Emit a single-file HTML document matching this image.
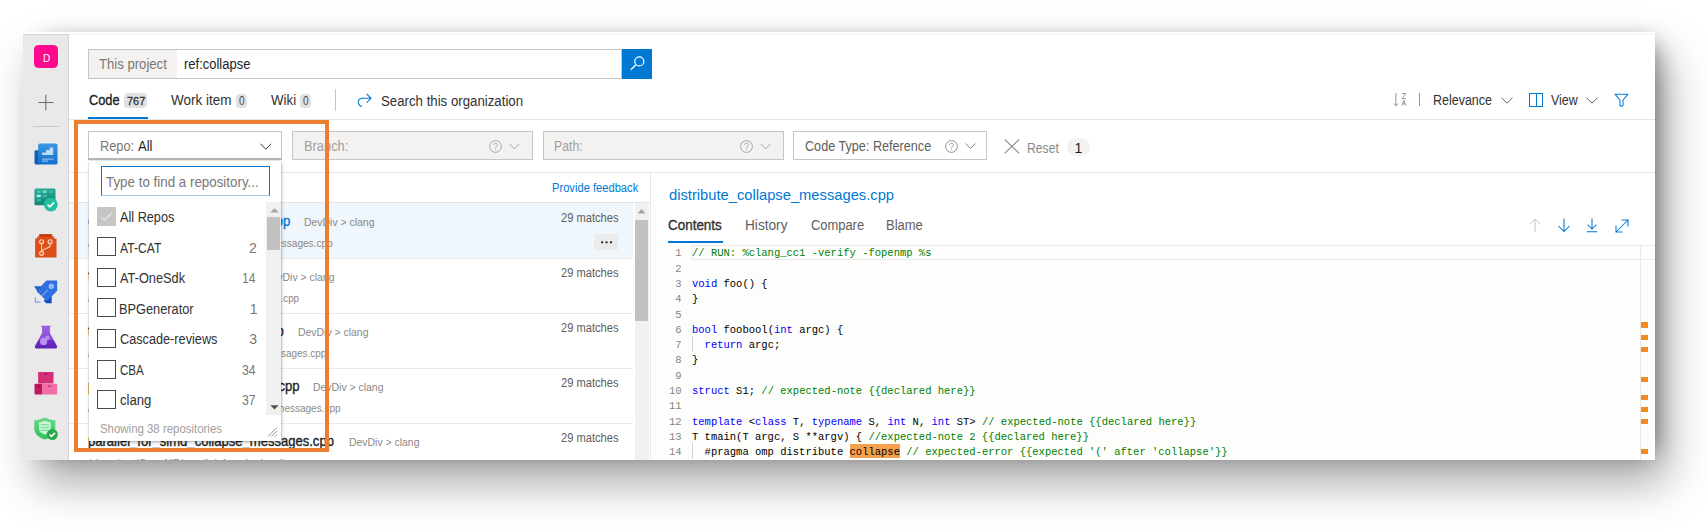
<!DOCTYPE html>
<html><head><meta charset="utf-8"><style>
*{margin:0;padding:0;box-sizing:border-box}
html,body{width:1707px;height:530px;background:#fff;overflow:hidden;font-family:"Liberation Sans",sans-serif;color:#323130}
#pg{position:absolute;left:23px;top:32px;width:1632px;height:428px;overflow:hidden;background:#fff;box-shadow:9.6px 1.3px 22.3px -10px rgba(0,0,0,0.488),12.6px 23.2px 41.3px -0.5px rgba(0,0,0,0.341)}
#c{position:absolute;left:-23px;top:-32px;width:1707px;height:530px}
.a{position:absolute}
.t{position:absolute;white-space:pre}
.mono{font-family:"Liberation Mono",monospace}
svg{position:absolute;overflow:visible}
</style></head><body>
<div id="pg"><div id="c">
<!-- sidebar -->
<div class="a" style="left:23px;top:34px;width:45px;height:430px;background:#e9e9e9;border-top:1px solid #d6d6d6"></div>
<div class="a" style="left:68px;top:34px;width:1px;height:430px;background:#d4d4d4"></div>
<div class="a" style="left:69px;top:34px;width:1590px;height:1px;background:#f2f2f2"></div>

<div class="a" style="left:34.3px;top:45px;width:23.4px;height:23.1px;background:#ff0a8f;border-radius:4.5px"></div>
<span class="t" style="font-size: 11px; color: rgb(255, 255, 255); position: absolute; left: 42.8px; top: 53px; line-height: 11px; white-space: pre; transform: scaleX(0.9); transform-origin: 0px 0px;">D</span>
<svg style="left:37px;top:94px" width="17" height="17" viewBox="0 0 17 17"><path d="M1.2 8.5 H16.5 M8.8 0.8 V16.5" stroke="#6f6f6f" stroke-width="1.1" fill="none"></path></svg>
<div class="a" style="left:32.6px;top:125.6px;width:26px;height:1px;background:#c9c9c9"></div>
<!-- overview -->
<svg style="left:34px;top:142.5px" width="24" height="22" viewBox="0 0 24 22">
<defs><linearGradient id="ovg" x1="0" y1="0" x2="0" y2="1"><stop offset="0" stop-color="#3a96e0"></stop><stop offset="1" stop-color="#1570cc"></stop></linearGradient></defs>
<rect x="0.5" y="7.3" width="6" height="14.2" rx="1.4" fill="#0f5fb4"></rect>
<rect x="4.2" y="0.6" width="19.3" height="20.9" rx="1.6" fill="url(#ovg)"></rect>
<path d="M8.1 12.1 V9.4 H12 V7 H15.6 V4.5 H19.2 V12.1 Z" fill="#b9defa"></path>
<rect x="8.1" y="15.6" width="11.4" height="1.1" fill="#8cc6f2"></rect>
<rect x="8.1" y="17.6" width="5.9" height="1.1" fill="#8cc6f2"></rect>
</svg>
<!-- boards -->
<svg style="left:34px;top:187.5px" width="25" height="25" viewBox="0 0 25 25">
<defs><linearGradient id="bdg" x1="0" y1="0" x2="0" y2="1"><stop offset="0" stop-color="#25a792"></stop><stop offset="1" stop-color="#128576"></stop></linearGradient></defs>
<rect x="0.5" y="0.5" width="21" height="16.8" rx="1.5" fill="url(#bdg)"></rect>
<rect x="2.6" y="2.4" width="4.2" height="2.6" fill="#48c3ad"></rect><rect x="8.7" y="2.4" width="4.2" height="2.6" fill="#6fdcc6"></rect><rect x="14.8" y="2.4" width="4.2" height="2.6" fill="#3bb49f"></rect>
<rect x="2.6" y="6.6" width="4.2" height="2.6" fill="#9ff5e4"></rect><rect x="8.7" y="6.6" width="4.2" height="2.6" fill="#3bb49f"></rect>
<rect x="2.6" y="10.8" width="4.2" height="2.6" fill="#3bb49f"></rect>
<circle cx="16.8" cy="16.6" r="6.9" fill="#22bf9f"></circle>
<path d="M13.6 16.6 L15.9 18.9 L20.2 14.4" fill="none" stroke="#fff" stroke-width="1.7"></path>
</svg>
<!-- repos -->
<svg style="left:35px;top:233.5px" width="22" height="24" viewBox="0 0 22 24">
<path d="M4.2 0.3 H17.1 V2.4 H19.2 V4.4 H21.5 V23.4 H0.1 V4.4 H2.2 V2.4 H4.2 Z" fill="#dd4f1a"></path>
<rect x="4.2" y="0.3" width="12.9" height="2.4" fill="#c23b06"></rect>
<path d="M6.6 10 V19.4 M15.1 10 V12.6 L7 16.6" fill="none" stroke="#f9c7ad" stroke-width="1.1"></path>
<circle cx="6.6" cy="7.8" r="2" fill="#e5622d" stroke="#fbd3c0" stroke-width="1.1"></circle>
<circle cx="15.1" cy="7.8" r="2" fill="#e5622d" stroke="#fbd3c0" stroke-width="1.1"></circle>
<circle cx="6.6" cy="19.4" r="2" fill="#e5622d" stroke="#fbd3c0" stroke-width="1.1"></circle>
</svg>
<!-- pipelines -->
<svg style="left:34px;top:279.5px" width="24" height="24" viewBox="0 0 24 24">
<path d="M0.2 6.2 H9.8 L4.6 13.6 Z" fill="#1f5fd0"></path>
<path d="M17.6 13.4 V23.2 H12.2 L9.6 20.4 Z" fill="#1149c0"></path>
<path d="M12.4 0.4 H23.2 V10.8 L12.8 21.2 L2.6 11 Z" fill="#2f6fe0"></path>
<circle cx="17.3" cy="6.3" r="2.8" fill="#92b6f4"></circle>
<path d="M7.8 16 L13.8 10" stroke="#6e9cf0" stroke-width="1.3"></path>
<path d="M1.4 17.2 V22.2 H6.4" fill="none" stroke="#7aa3f2" stroke-width="1.3"></path>
</svg>
<!-- test plans -->
<svg style="left:34px;top:325px" width="25" height="25" viewBox="0 0 25 25">
<defs><linearGradient id="tpg" x1="0" y1="0" x2="0" y2="1"><stop offset="0" stop-color="#9d62e2"></stop><stop offset="0.62" stop-color="#8a4bd8"></stop><stop offset="0.66" stop-color="#6d2fc3"></stop><stop offset="1" stop-color="#5f22b5"></stop></linearGradient></defs>
<path d="M7.2 0.7 H16.8 V2 H15.9 V8 L23 21 C23.6 22.3 22.9 23.4 21.5 23.4 H2.5 C1.1 23.4 0.4 22.3 1 21 L8.1 8 V2 H7.2 Z" fill="url(#tpg)"></path>
<circle cx="13.5" cy="12.8" r="2.3" fill="#b38cf0"></circle>
<circle cx="9.6" cy="16.4" r="3.6" fill="#b992f0"></circle>
</svg>
<!-- artifacts -->
<svg style="left:34px;top:370.5px" width="24" height="24" viewBox="0 0 24 24">
<rect x="4.1" y="0.9" width="15.4" height="11.6" rx="0.8" fill="#d42f78"></rect>
<rect x="10" y="2.7" width="3.6" height="1.2" fill="#9e1550"></rect>
<rect x="0.5" y="12.7" width="8" height="10.9" rx="0.8" fill="#c0175f"></rect>
<rect x="8.1" y="12.7" width="15.1" height="10.9" rx="0.8" fill="#ef6fa6"></rect>
<rect x="3.6" y="14.6" width="3" height="1.2" fill="#8f0d44"></rect>
<rect x="13.6" y="14.6" width="3.6" height="1.2" fill="#b52c66"></rect>
</svg>
<!-- shield -->
<svg style="left:34px;top:416.5px" width="25" height="25" viewBox="0 0 25 25">
<defs><linearGradient id="shg" x1="0" y1="0" x2="0" y2="1"><stop offset="0" stop-color="#6ad98b"></stop><stop offset="1" stop-color="#2fc25c"></stop></linearGradient></defs>
<path d="M0.3 3.3 C4 3.3 7 2 10.8 0.5 C14.6 2 17.6 3.3 21.3 3.3 V11.5 C21.3 16.5 17 20.6 10.8 22.5 C4.6 20.6 0.3 16.5 0.3 11.5 Z" fill="url(#shg)"></path>
<path d="M5 5.3 C7 5.3 8.8 4.5 10.8 3.7 C12.8 4.5 14.6 5.3 16.6 5.3 V11.8 C16.6 14.4 14.4 16.4 10.8 17.6 C7.2 16.4 5 14.4 5 11.8 Z" fill="#c9f5d3"></path>
<rect x="6.8" y="7.2" width="8" height="1.1" fill="#6ed88e"></rect><rect x="6.8" y="10" width="8" height="1.1" fill="#6ed88e"></rect><rect x="6.8" y="12.8" width="8" height="1.1" fill="#6ed88e"></rect>
<circle cx="18.3" cy="17.5" r="5.5" fill="#2aa84b"></circle>
<path d="M15.6 17.5 L17.5 19.4 L21 15.9" fill="none" stroke="#fff" stroke-width="1.5"></path>
</svg>


<!-- search box -->
<div class="a" style="left:88px;top:49px;width:534px;height:30px;border:1px solid #c8c6c4;background:#fff"></div>
<div class="a" style="left:89px;top:50px;width:88px;height:28px;background:#f3f2f1"></div>
<span class="t" style="font-size: 14px; color: rgb(121, 119, 117); position: absolute; left: 98.9px; top: 57px; line-height: 14px; white-space: pre; transform: scaleX(0.937); transform-origin: 0px 0px;">This project</span>
<span class="t" style="font-size: 14px; color: rgb(32, 31, 30); position: absolute; left: 184px; top: 57px; line-height: 14px; white-space: pre; transform: scaleX(0.9275); transform-origin: 0px 0px;">ref:collapse</span>
<div class="a" style="left:621.5px;top:48.6px;width:30.5px;height:30.2px;background:#0078d4"></div>
<svg style="left:622px;top:49px" width="30" height="30" viewBox="0 0 30 30"><circle cx="17.3" cy="12.4" r="4.5" fill="none" stroke="#fff" stroke-width="1.2"></circle><line x1="14.1" y1="15.7" x2="8.8" y2="20.8" stroke="#fff" stroke-width="1.2"></line></svg>
<!-- tabs -->
<span class="t" style="font-size: 14px; -webkit-text-stroke: 0.35px rgb(32, 31, 30); color: rgb(32, 31, 30); position: absolute; left: 88.75px; top: 93px; line-height: 14px; white-space: pre; transform: scaleX(0.9144); transform-origin: 0px 0px;">Code</span>
<div class="a" style="left:124.1px;top:93.2px;width:22.9px;height:14.7px;background:#e1e1e1;border-radius:4px"></div>
<span class="t" style="font-size: 11.6px; -webkit-text-stroke: 0.3px rgb(50, 49, 48); color: rgb(50, 49, 48); position: absolute; left: 126.6px; top: 95px; line-height: 11.6px; white-space: pre; transform: scaleX(0.9473); transform-origin: 0px 0px;">767</span>
<div class="a" style="left:88px;top:117px;width:60px;height:2px;background:#0078d4"></div>
<span class="t" style="font-size: 14px; color: rgb(50, 49, 48); position: absolute; left: 171.3px; top: 93px; line-height: 14px; white-space: pre; transform: scaleX(0.9648); transform-origin: 0px 0px;">Work item</span>
<div class="a" style="left:236px;top:93.6px;width:11px;height:14.5px;background:#e1e1e1;border-radius:4px"></div>
<span class="t" style="font-size: 12.2px; color: rgb(77, 75, 73); position: absolute; left: 238.6px; top: 95px; line-height: 12.2px; white-space: pre; transform: scaleX(0.8286); transform-origin: 0px 0px;">0</span>
<span class="t" style="font-size: 14px; color: rgb(50, 49, 48); position: absolute; left: 271.2px; top: 93px; line-height: 14px; white-space: pre; transform: scaleX(0.9497); transform-origin: 0px 0px;">Wiki</span>
<div class="a" style="left:300.3px;top:93.6px;width:11.2px;height:14.5px;background:#e1e1e1;border-radius:4px"></div>
<span class="t" style="font-size: 12.2px; color: rgb(77, 75, 73); position: absolute; left: 303px; top: 95px; line-height: 12.2px; white-space: pre; transform: scaleX(0.8286); transform-origin: 0px 0px;">0</span>
<div class="a" style="left:335px;top:89px;width:1px;height:22px;background:#c8c6c4"></div>
<svg style="left:356px;top:92px" width="16" height="16" viewBox="0 0 16 16"><path d="M5.8 14.6 C0.8 12.6 1.2 6.3 6.6 6.3 H15 M10.6 1.8 L15 6.3 L10.6 10.6" fill="none" stroke="#0078d4" stroke-width="1.1"></path></svg>
<span class="t" style="font-size: 14px; color: rgb(50, 49, 48); position: absolute; left: 380.7px; top: 94px; line-height: 14px; white-space: pre; transform: scaleX(0.9457); transform-origin: 0px 0px;">Search this organization</span>
<div class="a" style="left:69px;top:119px;width:1590px;height:1px;background:#e6e6e6"></div>
<!-- right tools -->
<svg style="left:1392px;top:92px" width="16" height="15" viewBox="0 0 16 15"><path d="M3.9 1 V14 M1.7 11.6 L3.9 13.9 L6.1 11.6" fill="none" stroke="#8a8886" stroke-width="0.9"></path><path d="M9.9 1.5 H13.8 L9.9 6.6 H13.9" fill="none" stroke="#8a8886" stroke-width="0.85"></path><path d="M9.8 13.7 L11.85 8.2 L13.9 13.7 M10.5 11.9 H13.2" fill="none" stroke="#8a8886" stroke-width="0.85"></path></svg>
<div class="a" style="left:1419.2px;top:93.2px;width:1px;height:13.2px;background:#9a9896"></div>
<span class="t" style="font-size: 14px; color: rgb(50, 49, 48); position: absolute; left: 1433.11px; top: 93px; line-height: 14px; white-space: pre; transform: scaleX(0.8919); transform-origin: 0px 0px;">Relevance</span>
<svg style="left:1500.5px;top:96.8px" width="12" height="7" viewBox="0 0 12 7"><path d="M0.5 0.8 L6 6.2 L11.5 0.8" fill="none" stroke="#605e5c" stroke-width="1"></path></svg>
<svg style="left:1528px;top:93px" width="16" height="15" viewBox="0 0 16 15"><rect x="1.5" y="0.5" width="13" height="13" fill="none" stroke="#0078d4" stroke-width="1"></rect><line x1="8.5" y1="0.5" x2="8.5" y2="13.5" stroke="#0078d4" stroke-width="1"></line></svg>
<span class="t" style="font-size: 14px; color: rgb(50, 49, 48); position: absolute; left: 1550.5px; top: 93px; line-height: 14px; white-space: pre; transform: scaleX(0.8876); transform-origin: 0px 0px;">View</span>
<svg style="left:1585.7px;top:96.8px" width="12" height="7" viewBox="0 0 12 7"><path d="M0.5 0.8 L6 6.2 L11.5 0.8" fill="none" stroke="#605e5c" stroke-width="1"></path></svg>
<svg style="left:1614px;top:93px" width="15" height="14" viewBox="0 0 15 14"><path d="M1 1.2 H14 L9 7 V12.6 Q7.5 13.7 6 12.6 V7 Z" fill="none" stroke="#0078d4" stroke-width="1.05" stroke-linejoin="round"></path></svg>


<!-- repo dropdown -->
<div class="a" style="left:88px;top:131px;width:194px;height:28.5px;border:1px solid #c8c6c4;background:#fff"></div>
<span class="t" style="font-size: 14px; color: rgb(121, 119, 117); position: absolute; left: 100.19px; top: 139px; line-height: 14px; white-space: pre; transform: scaleX(0.9135); transform-origin: 0px 0px;">Repo:</span>
<span class="t" style="font-size: 14px; color: rgb(32, 31, 30); position: absolute; left: 137.6px; top: 139px; line-height: 14px; white-space: pre; transform: scaleX(0.9321); transform-origin: 0px 0px;">All</span>
<svg style="left:260px;top:143px" width="12" height="7" viewBox="0 0 12 7"><path d="M0.5 0.8 L5.8 6.2 L11.1 0.8" fill="none" stroke="#323130" stroke-width="1"></path></svg>
<!-- branch -->
<div class="a" style="left:292px;top:131px;width:241px;height:29px;border:1px solid #c8c6c4;background:#f3f2f1"></div>
<span class="t" style="font-size: 14px; color: rgb(161, 159, 157); position: absolute; left: 303.58px; top: 139px; line-height: 14px; white-space: pre; transform: scaleX(0.9189); transform-origin: 0px 0px;">Branch:</span>
<svg style="left:489px;top:140px" width="13" height="13" viewBox="0 0 13 13"><circle cx="6.5" cy="6.5" r="5.9" fill="none" stroke="#a19f9d" stroke-width="0.9"></circle><path d="M4.6 5 C4.6 3.8 5.5 3.2 6.5 3.2 C7.6 3.2 8.4 3.9 8.4 4.9 C8.4 6.2 6.6 6.3 6.6 7.8" fill="none" stroke="#a19f9d" stroke-width="0.9"></path><circle cx="6.6" cy="9.6" r="0.55" fill="#a19f9d"></circle></svg>
<svg style="left:509px;top:143px" width="12" height="7" viewBox="0 0 12 7"><path d="M0.5 0.8 L5.5 5.8 L10.5 0.8" fill="none" stroke="#a19f9d" stroke-width="1"></path></svg>
<!-- path -->
<div class="a" style="left:542.5px;top:131px;width:241px;height:29px;border:1px solid #c8c6c4;background:#f3f2f1"></div>
<span class="t" style="font-size: 14px; color: rgb(161, 159, 157); position: absolute; left: 554.12px; top: 139px; line-height: 14px; white-space: pre; transform: scaleX(0.8766); transform-origin: 0px 0px;">Path:</span>
<svg style="left:739.7px;top:140px" width="13" height="13" viewBox="0 0 13 13"><circle cx="6.5" cy="6.5" r="5.9" fill="none" stroke="#a19f9d" stroke-width="0.9"></circle><path d="M4.6 5 C4.6 3.8 5.5 3.2 6.5 3.2 C7.6 3.2 8.4 3.9 8.4 4.9 C8.4 6.2 6.6 6.3 6.6 7.8" fill="none" stroke="#a19f9d" stroke-width="0.9"></path><circle cx="6.6" cy="9.6" r="0.55" fill="#a19f9d"></circle></svg>
<svg style="left:759.5px;top:143px" width="12" height="7" viewBox="0 0 12 7"><path d="M0.5 0.8 L5.5 5.8 L10.5 0.8" fill="none" stroke="#a19f9d" stroke-width="1"></path></svg>
<!-- code type -->
<div class="a" style="left:793px;top:131px;width:194px;height:29px;border:1px solid #c8c6c4;background:#fff"></div>
<span class="t" style="font-size: 14px; color: rgb(96, 94, 92); position: absolute; left: 805.3px; top: 139px; line-height: 14px; white-space: pre; transform: scaleX(0.9024); transform-origin: 0px 0px;">Code Type: Reference</span>
<svg style="left:944.8px;top:139.5px" width="13" height="13" viewBox="0 0 13 13"><circle cx="6.5" cy="6.5" r="5.9" fill="none" stroke="#8a8886" stroke-width="0.9"></circle><path d="M4.6 5 C4.6 3.8 5.5 3.2 6.5 3.2 C7.6 3.2 8.4 3.9 8.4 4.9 C8.4 6.2 6.6 6.3 6.6 7.8" fill="none" stroke="#8a8886" stroke-width="0.9"></path><circle cx="6.6" cy="9.6" r="0.55" fill="#8a8886"></circle></svg>
<svg style="left:965px;top:142.8px" width="12" height="7" viewBox="0 0 12 7"><path d="M0.5 0.5 L5.5 5.5 L10.5 0.5" fill="none" stroke="#8a8886" stroke-width="1"></path></svg>
<!-- reset -->
<svg style="left:1003.5px;top:138.7px" width="16" height="15" viewBox="0 0 16 15"><path d="M0.6 0.4 L15.2 14.4 M15.2 0.4 L0.6 14.4" fill="none" stroke="#8a8886" stroke-width="1.1"></path></svg>
<span class="t" style="font-size: 14px; color: rgb(138, 136, 134); position: absolute; left: 1026.93px; top: 141px; line-height: 14px; white-space: pre; transform: scaleX(0.8688); transform-origin: 0px 0px;">Reset</span>
<div class="a" style="left:1066.5px;top:137.7px;width:23.2px;height:18.2px;background:#f3f2f1;border-radius:9px"></div>
<span class="t" style="font-size: 14px; color: rgb(32, 31, 30); position: absolute; left: 1074.5px; top: 141px; line-height: 14px; white-space: pre;">1</span>
<div class="a" style="left:69px;top:171.5px;width:1590px;height:1px;background:#e6e6e6"></div>


<div class="a" style="left:69px;top:202px;width:581px;height:1px;background:#e6e6e6"></div>
<span class="t" style="font-size: 12.3px; color: rgb(0, 120, 212); position: absolute; left: 551.79px; top: 182px; line-height: 12.3px; white-space: pre; transform: scaleX(0.9076); transform-origin: 0px 0px;">Provide feedback</span>
<div class="a" style="left:69px;top:203px;width:564px;height:55.5px;background:#eff6fc"></div>
<span class="t" style="font-size: 14.2px; -webkit-text-stroke: 0.35px rgb(0, 120, 212); color: rgb(0, 120, 212); position: absolute; left: 88px; top: 214px; line-height: 14.2px; white-space: pre; transform: scaleX(0.9328); transform-origin: 0px 0px;">distribute_collapse_messages.cpp</span>
<span class="t" style="font-size: 11.3px; color: rgb(138, 136, 134); position: absolute; left: 304.4px; top: 217px; line-height: 11.3px; white-space: pre; transform: scaleX(0.9236); transform-origin: 0px 0px;">DevDiv &gt; clang</span>
<span class="t" style="font-size: 11.6px; color: rgb(138, 136, 134); position: absolute; left: 88px; top: 237px; line-height: 11.6px; white-space: pre; transform: scaleX(0.8665); transform-origin: 0px 0px;">/clang/test/OpenMP/distribute_collapse_messages.cpp</span>
<span class="t" style="font-size: 12.3px; color: rgb(96, 94, 92); position: absolute; left: 560.7px; top: 212px; line-height: 12.3px; white-space: pre; transform: scaleX(0.9051); transform-origin: 0px 0px;">29 matches</span>
<span class="t" style="font-size: 14.2px; -webkit-text-stroke: 0.35px rgb(32, 31, 30); color: rgb(32, 31, 30); position: absolute; left: 88px; top: 269px; line-height: 14.2px; white-space: pre; transform: scaleX(0.9183); transform-origin: 0px 0px;">for_collapse_messages.cpp</span>
<span class="t" style="font-size: 11.3px; color: rgb(138, 136, 134); position: absolute; left: 263.6px; top: 272px; line-height: 11.3px; white-space: pre; transform: scaleX(0.9236); transform-origin: 0px 0px;">DevDiv &gt; clang</span>
<span class="t" style="font-size: 11.6px; color: rgb(138, 136, 134); position: absolute; left: 88px; top: 292px; line-height: 11.6px; white-space: pre; transform: scaleX(0.8485); transform-origin: 0px 0px;">/clang/test/OpenMP/for_collapse_messages.cpp</span>
<span class="t" style="font-size: 12.3px; color: rgb(96, 94, 92); position: absolute; left: 560.7px; top: 267px; line-height: 12.3px; white-space: pre; transform: scaleX(0.9051); transform-origin: 0px 0px;">29 matches</span>
<div class="a" style="left:69px;top:257.55px;width:564px;height:1px;background:#eaeaea"></div>
<span class="t" style="font-size: 14.2px; -webkit-text-stroke: 0.35px rgb(32, 31, 30); color: rgb(32, 31, 30); position: absolute; left: 88px; top: 324px; line-height: 14.2px; white-space: pre; transform: scaleX(0.9234); transform-origin: 0px 0px;">taskloop_collapse_messages.cpp</span>
<span class="t" style="font-size: 11.3px; color: rgb(138, 136, 134); position: absolute; left: 298.3px; top: 327px; line-height: 11.3px; white-space: pre; transform: scaleX(0.9236); transform-origin: 0px 0px;">DevDiv &gt; clang</span>
<span class="t" style="font-size: 11.6px; color: rgb(138, 136, 134); position: absolute; left: 88px; top: 347px; line-height: 11.6px; white-space: pre; transform: scaleX(0.8555); transform-origin: 0px 0px;">/clang/test/OpenMP/taskloop_collapse_messages.cpp</span>
<span class="t" style="font-size: 12.3px; color: rgb(96, 94, 92); position: absolute; left: 560.7px; top: 322px; line-height: 12.3px; white-space: pre; transform: scaleX(0.9051); transform-origin: 0px 0px;">29 matches</span>
<div class="a" style="left:69px;top:312.60px;width:564px;height:1px;background:#eaeaea"></div>
<span class="t" style="font-size: 14.2px; -webkit-text-stroke: 0.35px rgb(32, 31, 30); color: rgb(32, 31, 30); position: absolute; left: 88px; top: 379px; line-height: 14.2px; white-space: pre; transform: scaleX(0.922); transform-origin: 0px 0px;">parallel_for_collapse_messages.cpp</span>
<span class="t" style="font-size: 11.3px; color: rgb(138, 136, 134); position: absolute; left: 313.3px; top: 382px; line-height: 11.3px; white-space: pre; transform: scaleX(0.9236); transform-origin: 0px 0px;">DevDiv &gt; clang</span>
<span class="t" style="font-size: 11.6px; color: rgb(138, 136, 134); position: absolute; left: 88px; top: 402px; line-height: 11.6px; white-space: pre; transform: scaleX(0.8633); transform-origin: 0px 0px;">/clang/test/OpenMP/parallel_for_collapse_messages.cpp</span>
<span class="t" style="font-size: 12.3px; color: rgb(96, 94, 92); position: absolute; left: 560.7px; top: 377px; line-height: 12.3px; white-space: pre; transform: scaleX(0.9051); transform-origin: 0px 0px;">29 matches</span>
<div class="a" style="left:69px;top:367.65px;width:564px;height:1px;background:#eaeaea"></div>
<span class="t" style="font-size: 14.2px; -webkit-text-stroke: 0.35px rgb(32, 31, 30); color: rgb(32, 31, 30); position: absolute; left: 88px; top: 434px; line-height: 14.2px; white-space: pre; transform: scaleX(0.9198); transform-origin: 0px 0px;">parallel_for_simd_collapse_messages.cpp</span>
<span class="t" style="font-size: 11.3px; color: rgb(138, 136, 134); position: absolute; left: 348.5px; top: 437px; line-height: 11.3px; white-space: pre; transform: scaleX(0.9236); transform-origin: 0px 0px;">DevDiv &gt; clang</span>
<span class="t" style="font-size: 11.6px; color: rgb(138, 136, 134); position: absolute; left: 88px; top: 457px; line-height: 11.6px; white-space: pre; transform: scaleX(0.9039); transform-origin: 0px 0px;">/clang/test/OpenMP/parallel_for_simd_collapse_messages.cpp</span>
<span class="t" style="font-size: 12.3px; color: rgb(96, 94, 92); position: absolute; left: 560.7px; top: 432px; line-height: 12.3px; white-space: pre; transform: scaleX(0.9051); transform-origin: 0px 0px;">29 matches</span>
<div class="a" style="left:69px;top:422.70px;width:564px;height:1px;background:#eaeaea"></div>
<div class="a" style="left:594px;top:233.6px;width:24.4px;height:16.1px;background:#ebebeb"></div>
<svg style="left:594px;top:233.6px" width="25" height="16" viewBox="0 0 25 16"><circle cx="8.2" cy="8.3" r="1.15" fill="#201f1e"></circle><circle cx="12.6" cy="8.3" r="1.15" fill="#201f1e"></circle><circle cx="17" cy="8.3" r="1.15" fill="#201f1e"></circle></svg>
<div class="a" style="left:635px;top:203px;width:14px;height:260px;background:#f1f1f1"></div>
<svg style="left:636px;top:208px" width="11" height="6" viewBox="0 0 11 6"><path d="M1.5 5.5 L5.5 1 L9.5 5.5 Z" fill="#a3a3a3"></path></svg>
<div class="a" style="left:635.4px;top:219.5px;width:12.4px;height:101.5px;background:#c1c1c1"></div>
<div class="a" style="left:649.5px;top:172px;width:1.7px;height:300px;background:#e8e8e8"></div>


<div class="a" style="left:651.5px;top:245.5px;width:1004px;height:220px;background:#fdfdfb"></div>
<span class="t" style="font-size: 14.8px; color: rgb(0, 120, 212); position: absolute; left: 669px; top: 188px; line-height: 14.8px; white-space: pre; transform: scaleX(0.9948); transform-origin: 0px 0px;">distribute_collapse_messages.cpp</span>
<span class="t" style="font-size: 14px; -webkit-text-stroke: 0.35px rgb(50, 49, 48); color: rgb(50, 49, 48); position: absolute; left: 668.2px; top: 218px; line-height: 14px; white-space: pre; transform: scaleX(0.9601); transform-origin: 0px 0px;">Contents</span>
<span class="t" style="font-size: 14px; color: rgb(96, 94, 92); position: absolute; left: 744.62px; top: 218px; line-height: 14px; white-space: pre; transform: scaleX(0.9751); transform-origin: 0px 0px;">History</span>
<span class="t" style="font-size: 14px; color: rgb(96, 94, 92); position: absolute; left: 810.6px; top: 218px; line-height: 14px; white-space: pre; transform: scaleX(0.9223); transform-origin: 0px 0px;">Compare</span>
<span class="t" style="font-size: 14px; color: rgb(96, 94, 92); position: absolute; left: 886.27px; top: 218px; line-height: 14px; white-space: pre; transform: scaleX(0.9281); transform-origin: 0px 0px;">Blame</span>
<div class="a" style="left:667.5px;top:241.4px;width:55px;height:2px;background:#0078d4"></div>
<svg style="left:1528px;top:218px" width="14" height="15" viewBox="0 0 14 15"><path d="M7 14 V1 M1.5 6.5 L7 1 L12.5 6.5" fill="none" stroke="#c8c6c4" stroke-width="1"></path></svg>
<svg style="left:1557px;top:218px" width="14" height="15" viewBox="0 0 14 15"><path d="M7 0.5 V13.5 M1.5 8 L7 13.5 L12.5 8" fill="none" stroke="#0078d4" stroke-width="1.05"></path></svg>
<svg style="left:1586px;top:218px" width="12" height="15" viewBox="0 0 12 15"><path d="M6 0.5 V11 M1.5 6.5 L6 11 L10.5 6.5 M0.8 13.8 H11.2" fill="none" stroke="#0078d4" stroke-width="1.05"></path></svg>
<svg style="left:1614.5px;top:218.5px" width="14" height="14" viewBox="0 0 14 14"><path d="M1 13 L13 1 M6.5 1 H13 V7.5 M1 6.5 V13 H7.5" fill="none" stroke="#0078d4" stroke-width="1.05"></path></svg>
<div class="a" style="left:691.5px;top:245px;width:964px;height:15px;border:1px solid #eaeaea;border-right:none;background:#fefefd"></div>
<div class="a" style="left:1640px;top:245px;width:1px;height:220px;background:#e8e8e8"></div>
<div class="a" style="left:1641px;top:322.3px;width:7px;height:5.4px;background:#f28c1f"></div>
<div class="a" style="left:1641px;top:334.7px;width:7px;height:5.4px;background:#f28c1f"></div>
<div class="a" style="left:1641px;top:346.8px;width:7px;height:5.4px;background:#f28c1f"></div>
<div class="a" style="left:1641px;top:376.6px;width:7px;height:5.4px;background:#f28c1f"></div>
<div class="a" style="left:1641px;top:394.6px;width:7px;height:5.4px;background:#f28c1f"></div>
<div class="a" style="left:1641px;top:406.6px;width:7px;height:5.4px;background:#f28c1f"></div>
<div class="a" style="left:1641px;top:418.8px;width:7px;height:5.4px;background:#f28c1f"></div>
<div class="a" style="left:1641px;top:448.7px;width:7px;height:5.4px;background:#f28c1f"></div>
<div class="a mono" style="left:640px;top:246.36px;width:41.6px;text-align:right;font-size:10.5px;line-height:15.3px;color:#858585">1</div>
<div class="a mono" style="left:692px;top:246.36px;font-size:10.5px;line-height:15.3px;white-space:pre;color:#000"><span style="color:#008000">// RUN: %clang_cc1 -verify -fopenmp %s</span></div>
<div class="a mono" style="left:640px;top:261.66px;width:41.6px;text-align:right;font-size:10.5px;line-height:15.3px;color:#858585">2</div>
<div class="a mono" style="left:640px;top:276.96px;width:41.6px;text-align:right;font-size:10.5px;line-height:15.3px;color:#858585">3</div>
<div class="a mono" style="left:692px;top:276.96px;font-size:10.5px;line-height:15.3px;white-space:pre;color:#000"><span style="color:#0000ff">void</span> foo() {</div>
<div class="a mono" style="left:640px;top:292.26px;width:41.6px;text-align:right;font-size:10.5px;line-height:15.3px;color:#858585">4</div>
<div class="a mono" style="left:692px;top:292.26px;font-size:10.5px;line-height:15.3px;white-space:pre;color:#000">}</div>
<div class="a mono" style="left:640px;top:307.56px;width:41.6px;text-align:right;font-size:10.5px;line-height:15.3px;color:#858585">5</div>
<div class="a mono" style="left:640px;top:322.86px;width:41.6px;text-align:right;font-size:10.5px;line-height:15.3px;color:#858585">6</div>
<div class="a mono" style="left:692px;top:322.86px;font-size:10.5px;line-height:15.3px;white-space:pre;color:#000"><span style="color:#0000ff">bool</span> foobool(<span style="color:#0000ff">int</span> argc) {</div>
<div class="a mono" style="left:640px;top:338.16px;width:41.6px;text-align:right;font-size:10.5px;line-height:15.3px;color:#858585">7</div>
<div class="a mono" style="left:692px;top:338.16px;font-size:10.5px;line-height:15.3px;white-space:pre;color:#000">  <span style="color:#0000ff">return</span> argc;</div>
<div class="a mono" style="left:640px;top:353.46px;width:41.6px;text-align:right;font-size:10.5px;line-height:15.3px;color:#858585">8</div>
<div class="a mono" style="left:692px;top:353.46px;font-size:10.5px;line-height:15.3px;white-space:pre;color:#000">}</div>
<div class="a mono" style="left:640px;top:368.76px;width:41.6px;text-align:right;font-size:10.5px;line-height:15.3px;color:#858585">9</div>
<div class="a mono" style="left:640px;top:384.06px;width:41.6px;text-align:right;font-size:10.5px;line-height:15.3px;color:#858585">10</div>
<div class="a mono" style="left:692px;top:384.06px;font-size:10.5px;line-height:15.3px;white-space:pre;color:#000"><span style="color:#0000ff">struct</span> S1; <span style="color:#008000">// expected-note {{declared here}}</span></div>
<div class="a mono" style="left:640px;top:399.36px;width:41.6px;text-align:right;font-size:10.5px;line-height:15.3px;color:#858585">11</div>
<div class="a mono" style="left:640px;top:414.66px;width:41.6px;text-align:right;font-size:10.5px;line-height:15.3px;color:#858585">12</div>
<div class="a mono" style="left:692px;top:414.66px;font-size:10.5px;line-height:15.3px;white-space:pre;color:#000"><span style="color:#0000ff">template</span> &lt;<span style="color:#0000ff">class</span> T, <span style="color:#0000ff">typename</span> S, <span style="color:#0000ff">int</span> N, <span style="color:#0000ff">int</span> ST&gt; <span style="color:#008000">// expected-note {{declared here}}</span></div>
<div class="a mono" style="left:640px;top:429.96px;width:41.6px;text-align:right;font-size:10.5px;line-height:15.3px;color:#858585">13</div>
<div class="a mono" style="left:692px;top:429.96px;font-size:10.5px;line-height:15.3px;white-space:pre;color:#000">T tmain(T argc, S **argv) { <span style="color:#008000">//expected-note 2 {{declared here}}</span></div>
<div class="a mono" style="left:640px;top:445.26px;width:41.6px;text-align:right;font-size:10.5px;line-height:15.3px;color:#858585">14</div>
<div class="a mono" style="left:692px;top:445.26px;font-size:10.5px;line-height:15.3px;white-space:pre;color:#000">  #pragma omp distribute <span style="background:#f5a04c;padding-top:2px">collapse</span> <span style="color:#008000">// expected-error {{expected '(' after 'collapse'}}</span></div>
<div class="a" style="left:692.3px;top:336.30px;width:1px;height:15.3px;background:#d3d3d3"></div>
<div class="a" style="left:692.3px;top:443.40px;width:1px;height:15.3px;background:#d3d3d3"></div>


<div class="a" style="left:88.5px;top:160.5px;width:192.8px;height:280.9px;background:#fff;box-shadow:0.8px 1.6px 3.6px rgba(0,0,0,0.28),0 0 1.5px rgba(0,0,0,0.3);z-index:5"></div>
<div class="a" style="left:88px;top:158.3px;width:194px;height:1.5px;background:#b5b5b5;z-index:6"></div>
<div class="a" style="z-index:7;left:101px;top:166px;width:168.5px;height:30.3px;border:1.2px solid #0078d4;border-bottom:1.6px solid #9fcdf1;background:#fff"></div>
<span class="t" style="z-index: 7; font-size: 14px; color: rgb(121, 119, 117); position: absolute; left: 106px; top: 175px; line-height: 14px; white-space: pre; transform: scaleX(0.9544); transform-origin: 0px 0px;">Type to find a repository...</span>
<div class="a" style="z-index:7;left:97px;top:206.80px;width:19px;height:19px;background:#c8c6c4"></div>
<svg style="z-index:7;left:97px;top:206.80px" width="19" height="19" viewBox="0 0 19 19"><path d="M4.2 9.8 L7.6 13.2 L14.8 6" fill="none" stroke="#e6e6e6" stroke-width="1.1"></path></svg>
<span class="t" style="z-index: 7; font-size: 14px; color: rgb(50, 49, 48); position: absolute; left: 119.8px; top: 210px; line-height: 14px; white-space: pre; transform: scaleX(0.9063); transform-origin: 0px 0px;">All Repos</span>
<div class="a" style="z-index:7;left:97px;top:237.35px;width:19px;height:19px;border:1.2px solid #4b4a48;background:#fff"></div>
<span class="t" style="z-index: 7; font-size: 14px; color: rgb(50, 49, 48); position: absolute; left: 119.8px; top: 241px; line-height: 14px; white-space: pre; transform: scaleX(0.8661); transform-origin: 0px 0px;">AT-CAT</span>
<span class="t" style="z-index: 7; font-size: 14px; color: rgb(121, 119, 117); position: absolute; left: 249.1px; top: 241px; line-height: 14px; white-space: pre;">2</span>
<div class="a" style="z-index:7;left:97px;top:267.90px;width:19px;height:19px;border:1.2px solid #4b4a48;background:#fff"></div>
<span class="t" style="z-index: 7; font-size: 14px; color: rgb(50, 49, 48); position: absolute; left: 119.8px; top: 271px; line-height: 14px; white-space: pre; transform: scaleX(0.9125); transform-origin: 0px 0px;">AT-OneSdk</span>
<span class="t" style="z-index: 7; font-size: 14px; color: rgb(121, 119, 117); position: absolute; left: 241.63px; top: 271px; line-height: 14px; white-space: pre; transform: scaleX(0.8657); transform-origin: 0px 0px;">14</span>
<div class="a" style="z-index:7;left:97px;top:298.45px;width:19px;height:19px;border:1.2px solid #4b4a48;background:#fff"></div>
<span class="t" style="z-index: 7; font-size: 14px; color: rgb(50, 49, 48); position: absolute; left: 118.89px; top: 302px; line-height: 14px; white-space: pre; transform: scaleX(0.913); transform-origin: 0px 0px;">BPGenerator</span>
<span class="t" style="z-index: 7; font-size: 14px; color: rgb(121, 119, 117); position: absolute; left: 249.7px; top: 302px; line-height: 14px; white-space: pre;">1</span>
<div class="a" style="z-index:7;left:97px;top:329.00px;width:19px;height:19px;border:1.2px solid #4b4a48;background:#fff"></div>
<span class="t" style="z-index: 7; font-size: 14px; color: rgb(50, 49, 48); position: absolute; left: 119.8px; top: 332px; line-height: 14px; white-space: pre; transform: scaleX(0.9071); transform-origin: 0px 0px;">Cascade-reviews</span>
<span class="t" style="z-index: 7; font-size: 14px; color: rgb(121, 119, 117); position: absolute; left: 249.3px; top: 332px; line-height: 14px; white-space: pre;">3</span>
<div class="a" style="z-index:7;left:97px;top:359.55px;width:19px;height:19px;border:1.2px solid #4b4a48;background:#fff"></div>
<span class="t" style="z-index: 7; font-size: 14px; color: rgb(50, 49, 48); position: absolute; left: 119.8px; top: 363px; line-height: 14px; white-space: pre; transform: scaleX(0.8252); transform-origin: 0px 0px;">CBA</span>
<span class="t" style="z-index: 7; font-size: 14px; color: rgb(121, 119, 117); position: absolute; left: 241.5px; top: 363px; line-height: 14px; white-space: pre; transform: scaleX(0.8742); transform-origin: 0px 0px;">34</span>
<div class="a" style="z-index:7;left:97px;top:390.10px;width:19px;height:19px;border:1.2px solid #4b4a48;background:#fff"></div>
<span class="t" style="z-index: 7; font-size: 14px; color: rgb(50, 49, 48); position: absolute; left: 119.8px; top: 393px; line-height: 14px; white-space: pre; transform: scaleX(0.9393); transform-origin: 0px 0px;">clang</span>
<span class="t" style="z-index: 7; font-size: 14px; color: rgb(121, 119, 117); position: absolute; left: 241.5px; top: 393px; line-height: 14px; white-space: pre; transform: scaleX(0.8742); transform-origin: 0px 0px;">37</span>
<div class="a" style="z-index:7;left:266.2px;top:201.6px;width:15px;height:213.3px;background:#f0f0f0"></div>
<svg style="z-index:7;left:269.5px;top:207.5px" width="9" height="5" viewBox="0 0 9 5"><path d="M0.3 4.5 L4.5 0.3 L8.7 4.5 Z" fill="#a6a6a6"></path></svg>
<div class="a" style="z-index:7;left:267.2px;top:217.3px;width:13.2px;height:32.4px;background:#c1c1c1"></div>
<svg style="z-index:7;left:269.5px;top:405px" width="9" height="5" viewBox="0 0 9 5"><path d="M0.3 0.3 L4.5 4.5 L8.7 0.3 Z" fill="#505050"></path></svg>
<span class="t" style="z-index: 7; font-size: 12.2px; color: rgb(161, 159, 157); position: absolute; left: 100.2px; top: 423px; line-height: 12.2px; white-space: pre; transform: scaleX(0.9378); transform-origin: 0px 0px;">Showing 38 repositories</span>
<svg style="z-index:7;left:267px;top:426.5px" width="11" height="10" viewBox="0 0 11 10"><path d="M1 9.5 L10 0.5 M4.5 9.5 L10 4 M8 9.5 L10 7.5" fill="none" stroke="#8a8886" stroke-width="0.9"></path></svg>
<div class="a" style="z-index:9;left:74px;top:120.2px;width:254.8px;height:331.5px;border:4px solid #ed7d31"></div>


</div></div>

</body></html>
